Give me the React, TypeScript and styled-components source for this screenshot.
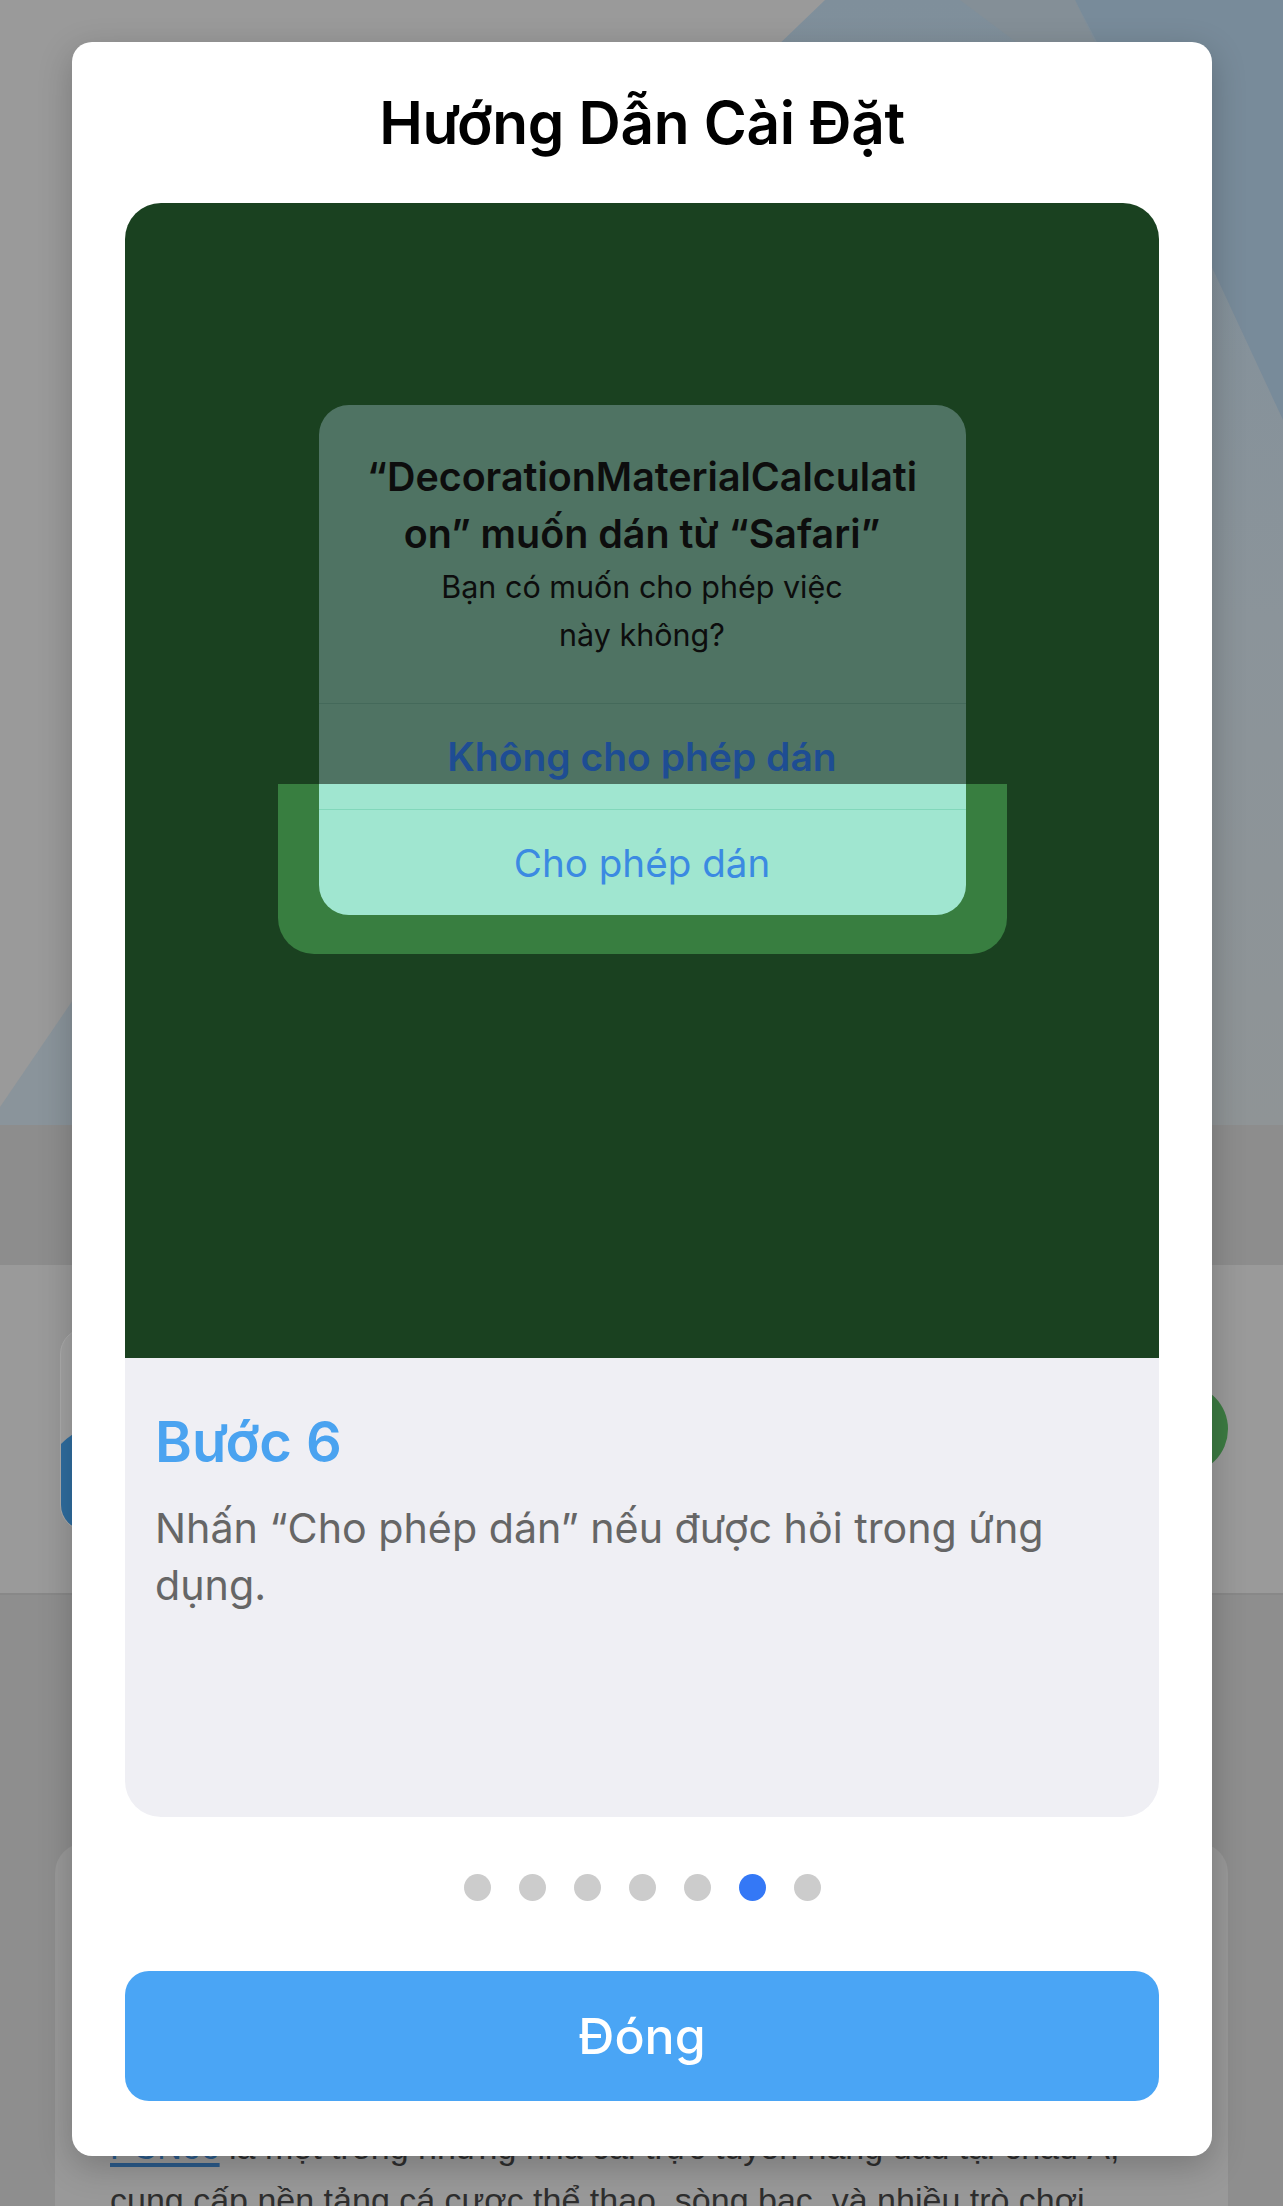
import React from "react";
import styled, { createGlobalStyle } from "styled-components";

const GlobalStyle = createGlobalStyle`
  html, body {
    margin: 0;
    padding: 0;
    height: 2206px;
    overflow: hidden;
    background: #8e8e8e;
  }
  body {
    font-family: Inter, "Noto Sans", "Liberation Sans", sans-serif;
  }
  * {
    box-sizing: border-box;
  }
`;

/* ---------- dimmed page behind the sheet ---------- */

const Page = styled.div`
  position: relative;
  width: 1283px;
  height: 2206px;
  overflow: hidden;
  background: #8e8e8e;
`;

const Hero = styled.section`
  height: 1125px;
  background: #9a9a9a;

  svg {
    display: block;
    width: 100%;
    height: 100%;
  }
`;

const NavBand = styled.div`
  height: 140px;
  background: #8d8d8d;
`;

const AppStrip = styled.section`
  height: 330px;
  display: flex;
  align-items: center;
  justify-content: space-between;
  padding: 0 55px 0 60px;
  background: #9a9a9a;
  border-bottom: 2px solid #888888;
`;

const AppCard = styled.div`
  width: 420px;
  height: 203px;
  border-radius: 26px;
  background: #a2a2a2;
  border: 1px solid #acacac;
  overflow: hidden;
`;

const AppLogo = styled.div`
  width: 140px;
  height: 140px;
  margin: 94px 0 0 -20px;
  border-radius: 50%;
  background: #2f6d9f;
`;

const GetButton = styled.div`
  width: 90px;
  height: 90px;
  border-radius: 50%;
  background: #3c7b42;
`;

const Lower = styled.section`
  padding: 248px 55px 0;
`;

const ArticleCard = styled.article`
  height: 600px;
  padding: 278px 55px 0;
  border-radius: 30px;
  background: #999999;
  color: #2e2e2e;
  font-family: "Liberation Sans", Arial, sans-serif;
  font-size: 34px;
  line-height: 53px;
  white-space: nowrap;
`;

const BrandLink = styled.a`
  color: #2b5b8b;
  text-decoration: underline;
  text-decoration-thickness: 4px;
  text-underline-offset: 4px;
`;

/* ---------- install guide sheet ---------- */

const Overlay = styled.div`
  position: absolute;
  inset: 0;
  display: flex;
  flex-direction: column;
  padding: 42px 71px 0 72px;
`;

const Sheet = styled.div`
  display: flex;
  flex-direction: column;
  padding: 0 53px 55px;
  border-radius: 20px;
  background: #ffffff;
  box-shadow: 0 10px 34px rgba(0, 0, 0, 0.22);
`;

const SheetTitle = styled.h1`
  height: 161px;
  margin: 0;
  display: flex;
  align-items: center;
  justify-content: center;
  font-size: 58.5px;
  font-weight: 600;
  letter-spacing: -0.3px;
  color: #000000;
`;

const Slide = styled.div`
  display: flex;
  flex-direction: column;
  border-radius: 36px;
  overflow: hidden;
`;

const Shot = styled.div`
  height: 1155px;
  padding-top: 202px;
  background: #1a4120;
`;

const AlertWrap = styled.div`
  position: relative;
  width: 647px;
  margin: 0 auto;
`;

const TapHighlight = styled.div`
  position: absolute;
  left: -41px;
  right: -41px;
  top: 379px;
  height: 170px;
  border-radius: 0 0 36px 36px;
  background: #387e40;
`;

const Alert = styled.div`
  position: relative;
  border-radius: 30px;
  overflow: hidden;
  background: linear-gradient(to bottom, #4f7363 0 379px, #a0e6d0 379px);
  text-align: center;
`;

const AlertBody = styled.div`
  height: 298px;
  padding: 44px 10px 0;
  color: #0d0d0d;
`;

const AlertTitle = styled.div`
  font-size: 39.4px;
  font-weight: 600;
  line-height: 57px;
`;

const AlertMessage = styled.div`
  font-size: 30.5px;
  line-height: 48px;
`;

const AlertAction = styled.div<{ $tone: "dark" | "light"; $strong?: boolean }>`
  height: 106px;
  display: flex;
  align-items: center;
  justify-content: center;
  border-top: 1px solid ${(p) => (p.$tone === "dark" ? "#44695a" : "#82d8bb")};
  font-size: ${(p) => (p.$strong ? "39px" : "38.6px")};
  font-weight: ${(p) => (p.$strong ? 600 : 400)};
  color: ${(p) => (p.$strong ? "#1e4d93" : "#3b8ae2")};
`;

const StepInfo = styled.div`
  height: 459px;
  padding: 51px 30px 0;
  background: #efeff4;
`;

const StepTitle = styled.h2`
  margin: 0;
  font-size: 56px;
  line-height: 66px;
  font-weight: 600;
  color: #4aa3f0;
`;

const StepText = styled.p`
  margin: 25px 0 0;
  font-size: 41.2px;
  line-height: 57px;
  color: #666666;
`;

const Dots = styled.div`
  display: flex;
  justify-content: center;
  gap: 28px;
  margin: 57px 0 70px;
`;

const Dot = styled.span<{ $active?: boolean }>`
  width: 27px;
  height: 27px;
  border-radius: 50%;
  background: ${(p) => (p.$active ? "#3478f6" : "#cccccc")};
`;

const CloseButton = styled.button`
  height: 130px;
  border: none;
  border-radius: 24px;
  background: #4aa5f5;
  color: #ffffff;
  font: inherit;
  font-size: 50px;
  font-weight: 500;
`;

const HeroArt = () => (
  <svg viewBox="0 0 1283 1125" preserveAspectRatio="none">
    <defs>
      <linearGradient id="sky" x1="0" y1="0" x2="0" y2="1">
        <stop offset="0" stopColor="#7f8f9b" />
        <stop offset="0.55" stopColor="#8b949a" />
        <stop offset="1" stopColor="#8f9496" />
      </linearGradient>
    </defs>
    <rect width="1283" height="1125" fill="#9a9a9a" />
    <polygon points="825,0 1283,0 1283,1125 1000,1125 700,120" fill="url(#sky)" />
    <polygon points="1075,0 1283,0 1283,420 1190,220" fill="#788b9a" />
    <polygon points="960,0 1075,0 1160,180 1040,60" fill="#848f97" />
    <polygon points="0,1107 400,520 700,1125 0,1125" fill="#8a949b" />
  </svg>
);

const steps = 7;
const current = 5;

export default function App() {
  return (
    <Page>
      <GlobalStyle />
      <Hero>
        <HeroArt />
      </Hero>
      <NavBand />
      <AppStrip>
        <AppCard>
          <AppLogo />
        </AppCard>
        <GetButton />
      </AppStrip>
      <Lower>
        <ArticleCard>
          <BrandLink href="#">PCN66</BrandLink> là một trong những nhà cái trực tuyến hàng đầu tại châu Á,
          <br />
          cung cấp nền tảng cá cược thể thao, sòng bạc, và nhiều trò chơi
        </ArticleCard>
      </Lower>

      <Overlay>
        <Sheet>
          <SheetTitle>Hướng Dẫn Cài Đặt</SheetTitle>
          <Slide>
            <Shot>
              <AlertWrap>
                <TapHighlight />
                <Alert>
                  <AlertBody>
                    <AlertTitle>
                      “DecorationMaterialCalculati
                      <br />
                      on” muốn dán từ “Safari”
                    </AlertTitle>
                    <AlertMessage>
                      Bạn có muốn cho phép việc
                      <br />
                      này không?
                    </AlertMessage>
                  </AlertBody>
                  <AlertAction $tone="dark" $strong>
                    Không cho phép dán
                  </AlertAction>
                  <AlertAction $tone="light">Cho phép dán</AlertAction>
                </Alert>
              </AlertWrap>
            </Shot>
            <StepInfo>
              <StepTitle>Bước 6</StepTitle>
              <StepText>Nhấn “Cho phép dán” nếu được hỏi trong ứng dụng.</StepText>
            </StepInfo>
          </Slide>
          <Dots>
            {Array.from({ length: steps }, (_, i) => (
              <Dot key={i} $active={i === current} />
            ))}
          </Dots>
          <CloseButton>Đóng</CloseButton>
        </Sheet>
      </Overlay>
    </Page>
  );
}
